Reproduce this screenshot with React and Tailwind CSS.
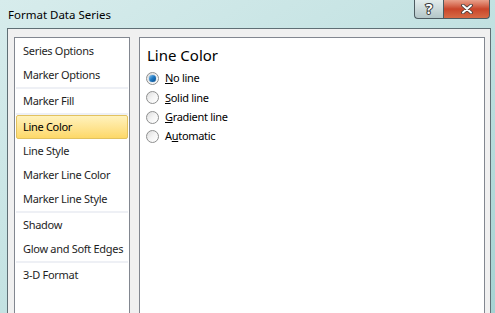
import React from 'react';

const font = { fontFamily: '"Noto Sans", "Liberation Sans", sans-serif' };

const groups = [
  ['Series Options', 'Marker Options'],
  ['Marker Fill'],
  ['Line Color', 'Line Style', 'Marker Line Color', 'Marker Line Style'],
  ['Shadow', 'Glow and Soft Edges'],
  ['3-D Format'],
];

function Radio({ checked }) {
  return (
    <span className="relative flex h-[13px] w-[13px] items-center justify-center rounded-full border border-[#8e8f8f] bg-gradient-to-br from-[#dcdcdc] via-[#f4f4f4] to-white">
      {checked && (
        <span className="h-[7px] w-[7px] rounded-full bg-gradient-to-br from-[#7fc4ef] via-[#1d77c0] to-[#0b4c8a] shadow-[0_0_1px_#1b5f9c]" />
      )}
    </span>
  );
}

function Option({ checked, accel, before, after }) {
  return (
    <div className="flex h-[19.3px] items-center gap-[6px]">
      <Radio checked={checked} />
      <span className="whitespace-nowrap text-[11px] tracking-[-0.3px] text-black">
        {before}
        <u>{accel}</u>
        {after}
      </span>
    </div>
  );
}

export default function App() {
  return (
    <div
      className="flex h-[313px] w-[495px] flex-col overflow-hidden bg-gradient-to-br from-[#d7ecec] via-[#c3e2e2] to-[#a6d3d3]"
      style={font}
    >
      {/* title bar */}
      <div className="flex h-[28px] shrink-0 items-start">
        <div className="pl-[8px] pt-[6px] text-[11.5px] text-black">Format Data Series</div>
        <div className="ml-auto mr-[5px] flex h-[19px]">
          <div className="flex w-[29px] items-center justify-center rounded-bl-[4px] border border-t-0 border-r-0 border-[#4d5b61] bg-gradient-to-b from-[#e2ecec] via-[#cbd9da] to-[#b3c6c8] text-[14px] font-bold leading-none text-white [-webkit-text-stroke:2px_#3a3a3a] [paint-order:stroke_fill]">
            ?
          </div>
          <div className="flex w-[47px] items-center justify-center rounded-br-[4px] border border-t-0 border-[#4d5b61] bg-gradient-to-b from-[#e8a08b] via-[#c9452a] to-[#d76a45]">
            <svg width="12" height="10" viewBox="0 0 12 10">
              <path d="M2 1.5 L10 8.5 M10 1.5 L2 8.5" stroke="#3a3a3a" strokeWidth="3.6" strokeLinecap="round" />
              <path d="M2 1.5 L10 8.5 M10 1.5 L2 8.5" stroke="#ffffff" strokeWidth="2" strokeLinecap="round" />
            </svg>
          </div>
        </div>
      </div>

      {/* client area */}
      <div className="ml-[7px] mr-[4px] flex flex-1 border border-b-0 border-[#5f6f75] bg-[#f0f0f0] pl-[6px] pr-[5px] pt-[8px]">
        {/* category list */}
        <div className="flex w-[116px] shrink-0 flex-col border border-b-0 border-[#828790] bg-white px-[1px] pt-[1px]">
          {groups.map((g, gi) => (
            <div key={gi} className={gi > 0 ? 'border-t-2 border-[#eef0f5]' : ''}>
              {g.map((item) => {
                const active = item === 'Line Color';
                return (
                  <div
                    key={item}
                    className={
                      active
                        ? 'flex h-[24px] items-center whitespace-nowrap rounded-[2px] border border-[#e2c25f] bg-gradient-to-b from-[#fff2bc] to-[#fdd867] pl-[6px] text-[11px] tracking-[-0.3px] text-black'
                        : 'flex h-[24px] items-center whitespace-nowrap pl-[7px] text-[11px] tracking-[-0.3px] text-[#1e1e1e]'
                    }
                  >
                    {item}
                  </div>
                );
              })}
            </div>
          ))}
        </div>

        {/* settings pane */}
        <div className="ml-[9px] flex flex-1 flex-col border border-b-0 border-[#828790] bg-white pl-[6px] pt-[6px]">
          <div className="pl-[1px] text-[15px] leading-[22px] text-black">Line Color</div>
          <div className="mt-[3px] flex flex-col">
            <Option checked accel="N" after="o line" />
            <Option accel="S" after="olid line" />
            <Option accel="G" after="radient line" />
            <Option before="A" accel="u" after="tomatic" />
          </div>
        </div>
      </div>
    </div>
  );
}
